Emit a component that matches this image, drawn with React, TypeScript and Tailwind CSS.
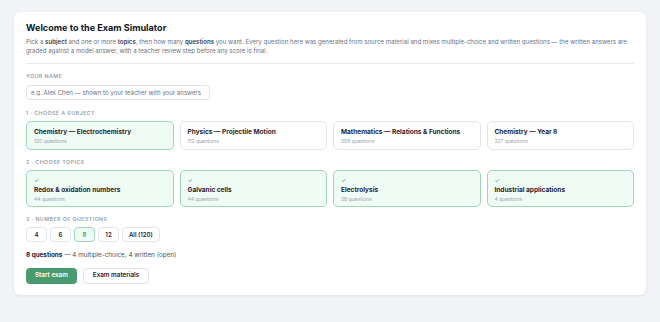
const subjects = [
	{ name: "Chemistry — Electrochemistry", count: 120, active: true },
	{ name: "Physics — Projectile Motion", count: 112, active: false },
	{ name: "Mathematics — Relations & Functions", count: 599, active: false },
	{ name: "Chemistry — Year 8", count: 227, active: false },
];

const topics = [
	{ name: "Redox & oxidation numbers", count: 44 },
	{ name: "Galvanic cells", count: 44 },
	{ name: "Electrolysis", count: 28 },
	{ name: "Industrial applications", count: 4 },
];

const counts = ["4", "6", "8", "12", "All (120)"];

function Label({ children }: { children: React.ReactNode }) {
	return (
		<div className="text-[5.3px] font-semibold uppercase leading-[9px] tracking-[0.08em] text-[#9aa1ad]">
			{children}
		</div>
	);
}

export default function App() {
	return (
		<div className="min-h-[322px] w-[660px] bg-[#f1f3f7] px-[14px] pt-[12px] font-['Inter',sans-serif]">
			<div className="rounded-[6px] bg-white px-[12px] pt-[8px] pb-[11px] shadow-[0_1px_3px_rgba(15,23,42,0.08)]">
				<h1 className="text-[9.1px] font-bold leading-[16px] text-[#111827]">
					Welcome to the Exam Simulator
				</h1>
				<p className="mt-[1px] text-[6.1px] leading-[9px] text-[#6b7280]">
					Pick a <b className="font-semibold text-[#374151]">subject</b> and one
					or more <b className="font-semibold text-[#374151]">topics</b>, then
					how many <b className="font-semibold text-[#374151]">questions</b> you
					want. Every question here was generated from source material and mixes
					multiple-choice and written questions — the written answers are graded
					against a model answer, with a teacher review step before any score is
					final.
				</p>
				<div className="mt-[8px] border-t border-[#e8eaee]" />

				<div className="mt-[8px]">
					<Label>Your name</Label>
				</div>
				<input
					className="mt-[4px] block h-[15px] w-[184px] rounded-[4px] border border-[#dfe2e7] px-[4px] text-[6.1px] text-[#111827] outline-none placeholder:text-[#6b7280]"
					placeholder="e.g. Alex Chen — shown to your teacher with your answers"
				/>

				<div className="mt-[9px]">
					<Label>1 · Choose a subject</Label>
				</div>
				<div className="mt-[3px] grid grid-cols-4 gap-[6px]">
					{subjects.map((s) => (
						<div
							key={s.name}
							className={
								s.active
									? "h-[29px] rounded-[5px] border border-[#9fd6b8] bg-[#effbf5] px-[7px] pt-[5px]"
									: "h-[29px] rounded-[5px] border border-[#e3e6ec] bg-white px-[7px] pt-[5px]"
							}
						>
							<div className="text-[6.5px] font-bold leading-[10px] text-[#1f2430]">
								{s.name}
							</div>
							<div className="text-[5px] leading-[8px] text-[#9ca3af]">
								{s.count} questions
							</div>
						</div>
					))}
				</div>

				<div className="mt-[8px]">
					<Label>2 · Choose topics</Label>
				</div>
				<div className="mt-[3px] grid grid-cols-4 gap-[6px]">
					{topics.map((t) => (
						<div
							key={t.name}
							className="h-[37px] rounded-[5px] border border-[#9fd6b8] bg-[#effbf5] px-[7px] pt-[6px]"
						>
							<div className="text-[6px] leading-[8px] text-[#3f9a6a]">✓</div>
							<div className="text-[6.5px] font-bold leading-[10px] text-[#1f2430]">
								{t.name}
							</div>
							<div className="text-[5px] leading-[8px] text-[#9ca3af]">
								{t.count} questions
							</div>
						</div>
					))}
				</div>

				<div className="mt-[8px]">
					<Label>3 · Number of questions</Label>
				</div>
				<div className="mt-[3px] flex gap-[3px]">
					{counts.map((c) => (
						<button
							key={c}
							type="button"
							className={
								c === "8"
									? "h-[15px] min-w-[21px] rounded-[4px] border border-[#9fd6b8] bg-[#effbf5] px-[6px] text-[6px] font-semibold text-[#3f9a6a]"
									: "h-[15px] min-w-[21px] rounded-[4px] border border-[#e3e6ec] bg-white px-[6px] text-[6px] font-semibold text-[#1f2430]"
							}
						>
							{c}
						</button>
					))}
				</div>

				<p className="mt-[8px] text-[6.35px] leading-[10px] text-[#4b5563]">
					<b className="font-bold text-[#1f2430]">8 questions</b> — 4
					multiple-choice, 4 written (open)
				</p>

				<div className="mt-[8px] flex gap-[6px]">
					<button
						type="button"
						className="h-[16px] rounded-[4px] bg-[#4a9a6f] px-[9px] text-[6.3px] font-semibold text-white"
					>
						Start exam
					</button>
					<button
						type="button"
						className="h-[16px] rounded-[4px] border border-[#dfe2e7] bg-white px-[9px] text-[6.3px] font-semibold text-[#1f2430]"
					>
						Exam materials
					</button>
				</div>
			</div>
		</div>
	);
}
